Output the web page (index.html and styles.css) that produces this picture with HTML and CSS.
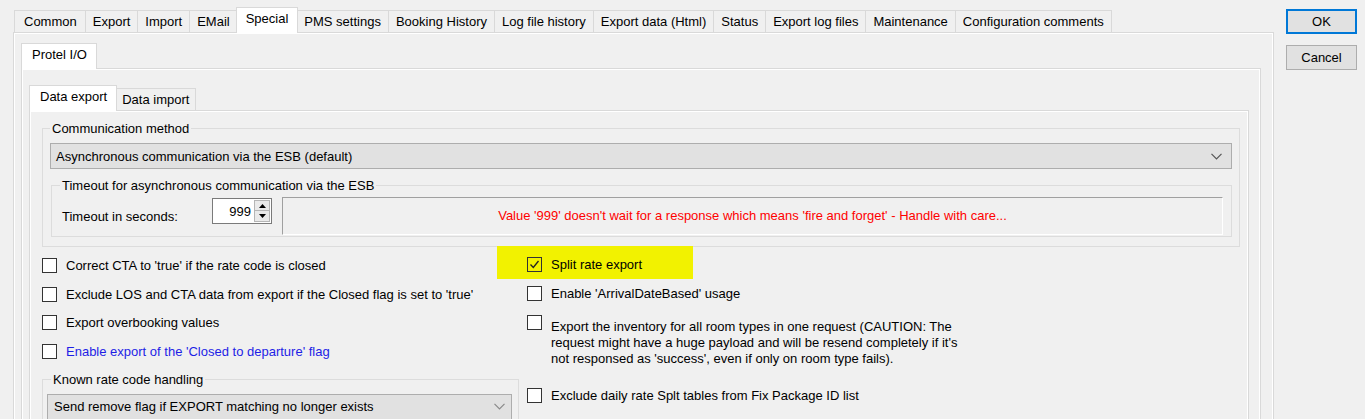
FILE: index.html
```html
<!DOCTYPE html>
<html>
<head>
<meta charset="utf-8">
<link rel="stylesheet" href="styles.css">
</head>
<body>
<div class="window">
  <div class="tabctl outer">
    <div class="tabstrip">
      <div class="tab">Common</div>
      <div class="tab">Export</div>
      <div class="tab">Import</div>
      <div class="tab">EMail</div>
      <div class="tab sel">Special</div>
      <div class="tab">PMS settings</div>
      <div class="tab">Booking History</div>
      <div class="tab">Log file history</div>
      <div class="tab">Export data (Html)</div>
      <div class="tab">Status</div>
      <div class="tab">Export log files</div>
      <div class="tab">Maintenance</div>
      <div class="tab">Configuration comments</div>
    </div>
    <div class="panel outer-panel">
      <div class="tabctl protel">
        <div class="tabstrip">
          <div class="tab sel">Protel I/O</div>
        </div>
        <div class="panel protel-panel">
          <div class="tabctl data">
            <div class="tabstrip">
              <div class="tab sel">Data export</div>
              <div class="tab">Data import</div>
            </div>
            <div class="panel data-panel">
              <fieldset class="group comm">
                <legend>Communication method</legend>
                <div class="combo">
                  <span>Asynchronous communication via the ESB (default)</span>
                  <svg class="chev" width="11" height="7" viewBox="0 0 11 7"><polyline points="0.5,0.8 5.5,5.8 10.5,0.8" fill="none" stroke="#555" stroke-width="1.2"/></svg>
                </div>
                <fieldset class="group timeout">
                  <legend>Timeout for asynchronous communication via the ESB</legend>
                  <div class="timeout-row">
                    <span class="tlabel">Timeout in seconds:</span>
                    <div class="spin">
                      <span class="spin-val">999</span>
                      <div class="spin-btns">
                        <div class="spin-btn"><svg width="7" height="4" viewBox="0 0 7 4"><polygon points="0,4 3.5,0 7,4" fill="#000"/></svg></div>
                        <div class="spin-btn"><svg width="7" height="4" viewBox="0 0 7 4"><polygon points="0,0 3.5,4 7,0" fill="#000"/></svg></div>
                      </div>
                    </div>
                    <div class="msg">Value '999' doesn't wait for a response which means 'fire and forget' - Handle with care...</div>
                  </div>
                </fieldset>
              </fieldset>
              <div class="options">
                <div class="col left-col">
                  <div class="opt"><span class="cb"></span><span>Correct CTA to 'true' if the rate code is closed</span></div>
                  <div class="opt"><span class="cb"></span><span>Exclude LOS and CTA data from export if the Closed flag is set to 'true'</span></div>
                  <div class="opt"><span class="cb"></span><span>Export overbooking values</span></div>
                  <div class="opt"><span class="cb"></span><span class="blue">Enable export of the 'Closed to departure' flag</span></div>
                  <fieldset class="group known">
                    <legend>Known rate code handling</legend>
                    <div class="combo combo-known">
                      <span>Send remove flag if EXPORT matching no longer exists</span>
                      <svg class="chev" width="11" height="7" viewBox="0 0 11 7"><polyline points="0.5,0.8 5.5,5.8 10.5,0.8" fill="none" stroke="#8a8a8a" stroke-width="1.2"/></svg>
                    </div>
                  </fieldset>
                </div>
                <div class="col right-col">
                  <div class="highlight">
                    <div class="opt"><span class="cb checked"><svg width="13" height="13" viewBox="0 0 13 13"><polyline points="2.5,6.5 5.3,9.5 10.5,3" fill="none" stroke="#222" stroke-width="1.3"/></svg></span><span>Split rate export</span></div>
                  </div>
                  <div class="opt"><span class="cb"></span><span>Enable 'ArrivalDateBased' usage</span></div>
                  <div class="opt multi"><span class="cb"></span><span class="mtext">Export the inventory for all room types in one request (CAUTION: The request might have a huge payload and will be resend completely if it's not responsed as 'success', even if only on room type fails).</span></div>
                  <div class="opt last"><span class="cb"></span><span>Exclude daily rate Splt tables from Fix Package ID list</span></div>
                </div>
              </div>
            </div>
          </div>
        </div>
      </div>
    </div>
  </div>
  <div class="buttons">
    <div class="btn ok">OK</div>
    <div class="btn">Cancel</div>
  </div>
</div>
</body>
</html>
```

FILE: styles.css
```css
* { box-sizing: border-box; }
html, body { margin: 0; padding: 0; }
body {
  background: #f0f0f0;
  font-family: "Liberation Sans", Arial, sans-serif;
  font-size: 13px;
  color: #000;
  width: 1365px;
  height: 419px;
  overflow: hidden;
}
.window {
  display: flex;
  align-items: flex-start;
  padding: 7px 0 0 13px;
}

/* tab controls */
.tabctl { display: flex; flex-direction: column; flex: none; }
.tabctl.outer { width: 1261px; }
.tabctl.protel { width: 1240px; }
.tabctl.data { width: 1220px; }

.tabstrip {
  display: flex;
  align-items: flex-end;
  height: 25px;
  padding-left: 1px;
  position: relative;
  z-index: 2;
}
.tab {
  height: 22px;
  line-height: 21px;
  padding: 0 7px;
  border: 1px solid #d9d9d9;
  border-bottom: none;
  background: #f0f0f0;
  margin-left: -1px;
  white-space: nowrap;
}
.tab:first-child { margin-left: 0; padding: 0 8px 0 9px; }
.tab.sel {
  height: 26px;
  line-height: 22px;
  background: #fff;
  margin: 0 -2px -1px -2px;
  padding: 0 9px;
  position: relative;
  z-index: 3;
}
.tab.sel + .tab { margin-left: 0; }
.tabctl.protel .tabstrip, .tabctl.data .tabstrip { padding-left: 2px; }
.tabctl.protel .tab.sel { padding: 0 9px 0 10px; }
.tabctl.data .tab.sel { padding: 0 9px 0 10px; }
.tabctl.data .tab.sel + .tab { padding: 0 6px; }

.panel {
  border: 1px solid #d9d9d9;
  background: #f0f0f0;
  box-shadow: inset 1px 1px 0 #fff, inset -1px -1px 0 #fff;
}
.outer-panel { height: 420px; padding: 10px 0 0 7px; }
.protel-panel { height: 400px; padding: 16px 0 0 7px; }
.data-panel { height: 360px; padding: 10px 0 0 12px; }

/* group boxes */
.group {
  border: 1px solid #dcdcdc;
  margin: 0;
  padding: 0 7px 9px;
  min-width: 0;
}
.group > legend {
  padding: 0 2px;
  line-height: 15px;
}
.comm { width: 1198px; }
.timeout { margin: 9px 0 0 1px; padding: 0 8px 1px; }
.timeout > legend { margin-left: 0; }

.combo {
  display: flex;
  align-items: center;
  justify-content: space-between;
  height: 26px;
  margin-top: 7px;
  padding: 0 9px 0 5px;
  background: #e1e1e1;
  border: 1px solid #adadad;
}
.chev { flex: none; }

.timeout-row {
  display: flex;
  align-items: center;
  margin-top: 4px;
  padding-left: 2px;
}
.tlabel { width: 150px; flex: none; }
.spin {
  align-self: flex-start;
  margin-top: 1px;
  width: 60px;
  height: 26px;
  flex: none;
  display: flex;
  align-items: center;
  background: #fff;
  border: 1px solid #7a7a7a;
  padding: 0 1px 0 2px;
}
.spin-val { flex: 1; text-align: right; padding-right: 3px; }
.spin-btns { display: flex; flex-direction: column; width: 16px; }
.spin-btn {
  height: 11px;
  display: flex;
  align-items: center;
  justify-content: center;
  background: #eaeaea;
  border: 1px solid #b5b5b5;
}
.spin-btn + .spin-btn { border-top: none; }
.msg {
  flex: 1;
  margin-left: 10px;
  height: 38px;
  line-height: 36px;
  text-align: center;
  color: #f00;
  border-top: 1px solid #a0a0a0;
  border-left: 1px solid #a0a0a0;
  border-right: 1px solid #fff;
  border-bottom: 1px solid #fff;
}

/* options */
.options {
  display: flex;
  margin-top: 4px;
}
.col { display: flex; flex-direction: column; flex: none; }
.left-col { width: 477px; }
.right-col { margin-left: 8px; width: 460px; }
.opt {
  display: flex;
  align-items: center;
  height: 29px;
  white-space: nowrap;
}
.left-col .opt { height: 28.7px; }
.cb {
  width: 15px;
  height: 15px;
  flex: none;
  border: 1px solid #333;
  background: #fff;
  margin-right: 9px;
  display: flex;
  align-items: center;
  justify-content: center;
}
.cb.checked { background: transparent; }
.blue { color: #1e1ee6; }

.highlight {
  background: #f2f200;
  width: 196px;
  height: 33px;
  margin: -5px 0 0 -30px;
  padding: 4px 0 0 30px;
}
.opt.multi {
  align-items: flex-start;
  height: auto;
  white-space: normal;
}
.opt.multi .cb { margin-top: 7px; }
.mtext { margin-top: 11px; line-height: 16px; width: 420px; }
.opt.last { margin-top: 14px; }

.known {
  margin-top: 6px;
  padding: 0 6px 9px 4px;
}
.known > legend { margin-left: 4px; }
.combo-known {
  margin-top: 7px;
  padding: 0 6px 0 6px;
}

/* buttons */
.buttons {
  display: flex;
  flex-direction: column;
  margin: 2px 0 0 12px;
}
.btn {
  width: 71px;
  height: 25px;
  line-height: 23px;
  text-align: center;
  background: #e1e1e1;
  border: 1px solid #adadad;
}
.btn + .btn { margin-top: 11px; }
.btn.ok { border: 2px solid #0078d7; line-height: 21px; }
```
